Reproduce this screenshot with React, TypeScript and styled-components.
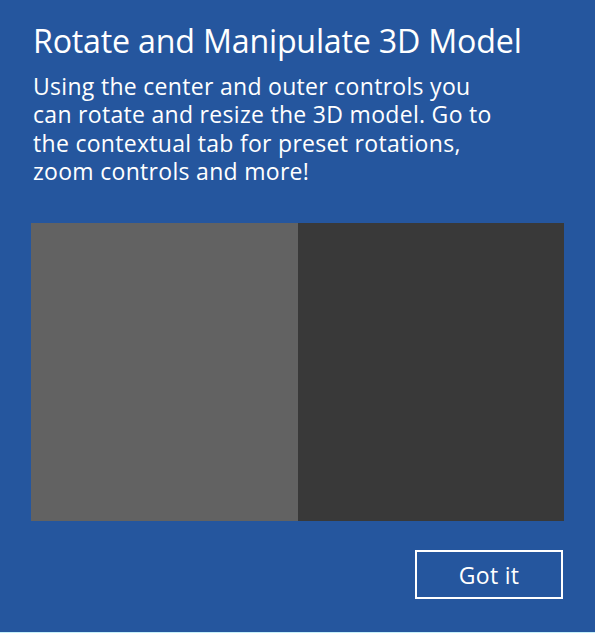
import React from "react";
import styled, { createGlobalStyle } from "styled-components";

const GlobalStyle = createGlobalStyle`
  html, body {
    margin: 0;
    padding: 0;
    background: #c6f1fb;
  }
`;

const Panel = styled.div`
  box-sizing: border-box;
  width: 595px;
  height: 632px;
  background: #25569e;
  padding: 21px 31px 0 31px;
  display: flex;
  flex-direction: column;
  font-family: "Open Sans", "Noto Sans", sans-serif;
  color: #fff;
`;

const Title = styled.h1`
  margin: 0 0 0 2px;
  font-size: 32.2px;
  line-height: 40px;
  font-weight: 400;
  letter-spacing: -0.2px;
`;

const Description = styled.p`
  margin: 11px 0 0 2px;
  font-size: 23px;
  line-height: 28.3px;
  font-weight: 400;
  letter-spacing: 0.3px;
  white-space: nowrap;
`;

const Preview = styled.div`
  display: grid;
  grid-template-columns: 267px 1fr;
  height: 298px;
  margin-top: 38px;
`;

const PreviewHalf = styled.div<{ $shade: string }>`
  background: ${(props) => props.$shade};
`;

const Footer = styled.div`
  display: flex;
  justify-content: flex-end;
  margin-top: 29px;
  padding-right: 1px;
`;

const Button = styled.button`
  box-sizing: border-box;
  width: 148px;
  height: 49px;
  background: transparent;
  border: 2px solid #fff;
  color: #fff;
  font-family: "Open Sans", "Noto Sans", sans-serif;
  font-size: 23px;
  letter-spacing: 0.3px;
  padding: 0;
  cursor: pointer;
`;

const lines = [
  "Using the center and outer controls you",
  "can rotate and resize the 3D model. Go to",
  "the contextual tab for preset rotations,",
  "zoom controls and more!",
];

export default function App() {
  return (
    <>
      <GlobalStyle />
      <Panel>
        <Title>Rotate and Manipulate 3D Model</Title>
        <Description>
          {lines.map((line, i) => (
            <React.Fragment key={i}>
              {line}
              {i < lines.length - 1 && <br />}
            </React.Fragment>
          ))}
        </Description>
        <Preview>
          <PreviewHalf $shade="#626262" />
          <PreviewHalf $shade="#393939" />
        </Preview>
        <Footer>
          <Button>Got it</Button>
        </Footer>
      </Panel>
    </>
  );
}
